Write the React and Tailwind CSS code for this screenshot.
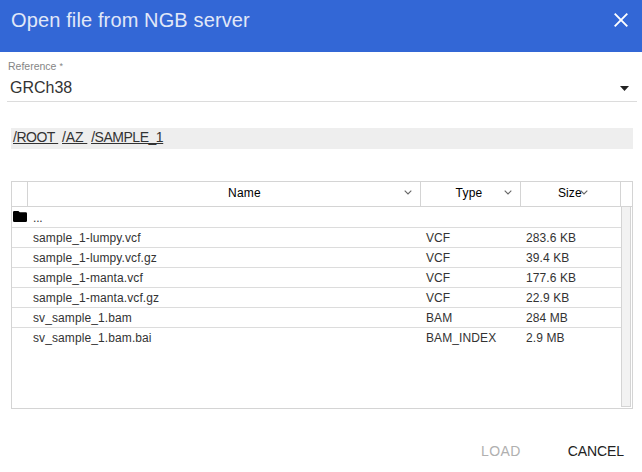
const rows = [
  ["sample_1-lumpy.vcf", "VCF", "283.6 KB"],
  ["sample_1-lumpy.vcf.gz", "VCF", "39.4 KB"],
  ["sample_1-manta.vcf", "VCF", "177.6 KB"],
  ["sample_1-manta.vcf.gz", "VCF", "22.9 KB"],
  ["sv_sample_1.bam", "BAM", "284 MB"],
  ["sv_sample_1.bam.bai", "BAM_INDEX", "2.9 MB"],
];

function Chevron() {
  return (
    <svg className="h-[5px] w-2 shrink-0" viewBox="0 0 8 5" fill="none" stroke="#666" strokeWidth="1.1">
      <path d="M0.7 0.7 4 4 7.3 0.7" />
    </svg>
  );
}

function Header() {
  return (
    <div className="flex h-[24px] text-[12px] leading-[22px] text-black">
      <div className="w-[16px] border-r border-[#d4d4d4]" />
      <div className="flex w-[393px] border-r border-[#d4d4d4] pr-2">
        <span className="flex-1 pl-[57px] text-center tracking-[0.2px]">Name</span>
        <span className="flex h-[20px] items-center"><Chevron /></span>
      </div>
      <div className="flex w-[100px] border-r border-[#d4d4d4] pr-2">
        <span className="flex-1 pl-[13px] text-center tracking-[0.2px]">Type</span>
        <span className="flex h-[20px] items-center"><Chevron /></span>
      </div>
      <div className="flex w-[100px] border-r border-[#d4d4d4] pl-[37px]">
        <span className="w-[22px]">Size</span>
        <span className="flex h-[20px] items-center"><Chevron /></span>
      </div>
    </div>
  );
}

function Row({ cells, last }) {
  return (
    <div className={"flex h-[20px] pl-[21px] leading-[20px] " + (last ? "" : "border-b border-[#dcdcdc]")}>
      <span className="w-[393px]">{cells[0]}</span>
      <span className="w-[100px]">{cells[1]}</span>
      <span>{cells[2]}</span>
    </div>
  );
}

export default function App() {
  return (
    <div className="flex h-[472px] w-[642px] flex-col overflow-hidden bg-white font-['Liberation_Sans',Arial,sans-serif] text-[#333]">
      <header className="flex h-[52px] justify-between bg-[#3367d6] pl-[11px] pr-[14px]">
        <h1 className="pt-[8px] text-[20px] leading-[24px] tracking-[0.13px] text-[#e1e8f8]">Open file from NGB server</h1>
        <svg className="mt-[13px] h-[14px] w-[14px]" viewBox="0 0 14 14" stroke="white" strokeWidth="1.9">
          <path d="M0.7 0.7 13.3 13.3M13.3 0.7 0.7 13.3" />
        </svg>
      </header>

      <div className="ml-[7px] flex h-[50px] w-[630px] flex-col border-b border-[#dcdcdc]">
        <label className="flex gap-[3px] pl-px pt-[8px] text-[10.5px] leading-[13px] tracking-[0px] text-[#858585]">
          Reference <span className="text-[9px] leading-[13px]">*</span>
        </label>
        <div className="flex items-center justify-between pl-[3px] pr-[8px] pt-[5px] text-[16px] leading-[20px]">
          <span>GRCh38</span>
          <svg className="h-[5px] w-[9px]" viewBox="0 0 9 5" fill="#222">
            <path d="M0 0H9L4.5 5Z" />
          </svg>
        </div>
      </div>

      <nav className="ml-[11px] mt-[26px] flex h-[21px] w-[622px] gap-[4px] bg-[#eee] pl-[2px] text-[14px] leading-[18px] tracking-[-0.48px] underline">
        <a className="whitespace-pre">/ROOT </a>
        <a className="whitespace-pre tracking-[-0.15px]">/AZ </a>
        <a>/SAMPLE_1</a>
      </nav>

      <section className="ml-[11px] mt-[32px] flex h-[228px] w-[622px] flex-col border border-[#d4d4d4] text-[12px] tracking-[0.1px]">
        <Header />
        <div className="flex flex-1 border-t border-[#d4d4d4]">
          <div className="w-[609px]">
            <div className="flex h-[21px] border-b border-[#dcdcdc]">
              <div className="w-[21px] pl-px pt-[4px]">
                <svg className="h-[11px] w-[14px]" viewBox="0 0 14 11">
                  <path d="M1.3 0H5.4L6.8 1.3H12.7Q14 1.3 14 2.6V9.7Q14 11 12.7 11H1.3Q0 11 0 9.7V1.3Q0 0 1.3 0Z" />
                </svg>
              </div>
              <span className="leading-[22px] tracking-[-0.2px]">...</span>
            </div>
            {rows.map((cells, i) => (
              <Row key={cells[0]} cells={cells} last={i === rows.length - 1} />
            ))}
          </div>
          <div className="mb-px w-[10px] border-x border-b border-[#d4d4d4] bg-[#f2f2f2]" />
        </div>
      </section>

      <footer className="mt-[32px] flex justify-end gap-[47px] pr-[18px] text-[14px] leading-[20px]">
        <span className="tracking-[0.4px] text-[#b0b0b0]">LOAD</span>
        <span className="tracking-[-0.1px] text-[#222]">CANCEL</span>
      </footer>
    </div>
  );
}
